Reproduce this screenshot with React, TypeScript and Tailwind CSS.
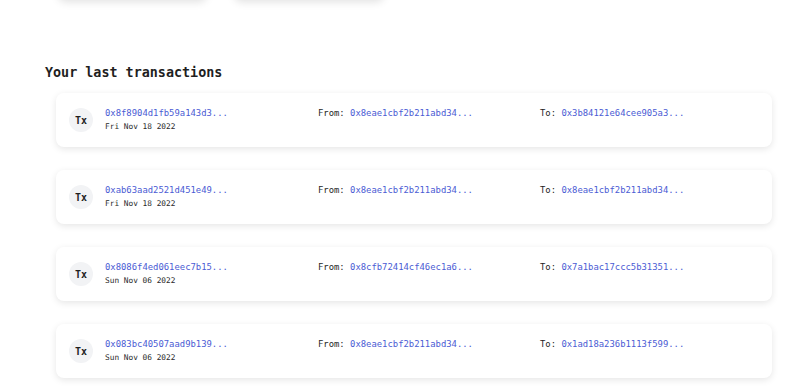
import React from 'react';

interface Tx {
  hash: string;
  date: string;
  from: string;
  to: string;
}

const txs: Tx[] = [
  { hash: '0x8f8904d1fb59a143d3...', date: 'Fri Nov 18 2022', from: '0x8eae1cbf2b211abd34...', to: '0x3b84121e64cee905a3...' },
  { hash: '0xab63aad2521d451e49...', date: 'Fri Nov 18 2022', from: '0x8eae1cbf2b211abd34...', to: '0x8eae1cbf2b211abd34...' },
  { hash: '0x8086f4ed061eec7b15...', date: 'Sun Nov 06 2022', from: '0x8cfb72414cf46ec1a6...', to: '0x7a1bac17ccc5b31351...' },
  { hash: '0x083bc40507aad9b139...', date: 'Sun Nov 06 2022', from: '0x8eae1cbf2b211abd34...', to: '0x1ad18a236b1113f599...' },
];

const mono = "font-['DejaVu_Sans_Mono','Liberation_Mono',monospace]";

export default function App() {
  return (
    <div className={`w-[806px] h-[389px] overflow-hidden bg-white text-[#1f1f1f] ${mono}`}>
      {/* cards above the fold, only their bottom edge shows */}
      <div className="flex gap-[27px] pl-[58px] -mt-[30px]">
        <div className="w-[149px] h-[30px] rounded-lg bg-white shadow-[0_2px_8px_rgba(0,0,0,0.12)]" />
        <div className="w-[150px] h-[30px] rounded-lg bg-white shadow-[0_2px_8px_rgba(0,0,0,0.12)]" />
      </div>

      <h2 className="mt-[65px] ml-[45px] text-[13.4px] leading-[16px] font-bold">Your last transactions</h2>

      <div className="mt-[12px] ml-[56px] w-[716px] flex flex-col gap-[23px]">
        {txs.map(tx => (
          <div key={tx.hash} className="h-[54px] flex items-center px-[13px] rounded-lg bg-white shadow-[0_2px_7px_rgba(0,0,0,0.1)]">
            <div className="w-6 h-6 rounded-full bg-[#f2f3f5] flex items-center justify-center text-[10px] font-bold">Tx</div>
            <div className="ml-[12px] flex flex-col">
              <div className="flex text-[8.9px] leading-[13px]">
                <span className="w-[213px] text-[#4a5bd4]">{tx.hash}</span>
                <span className="w-[222px]">From: <span className="text-[#4a5bd4]">{tx.from}</span></span>
                <span>To: <span className="text-[#4a5bd4]">{tx.to}</span></span>
              </div>
              <div className="text-[7.8px] leading-[13px] text-[#2a2a2a]">{tx.date}</div>
            </div>
          </div>
        ))}
      </div>
    </div>
  );
}
